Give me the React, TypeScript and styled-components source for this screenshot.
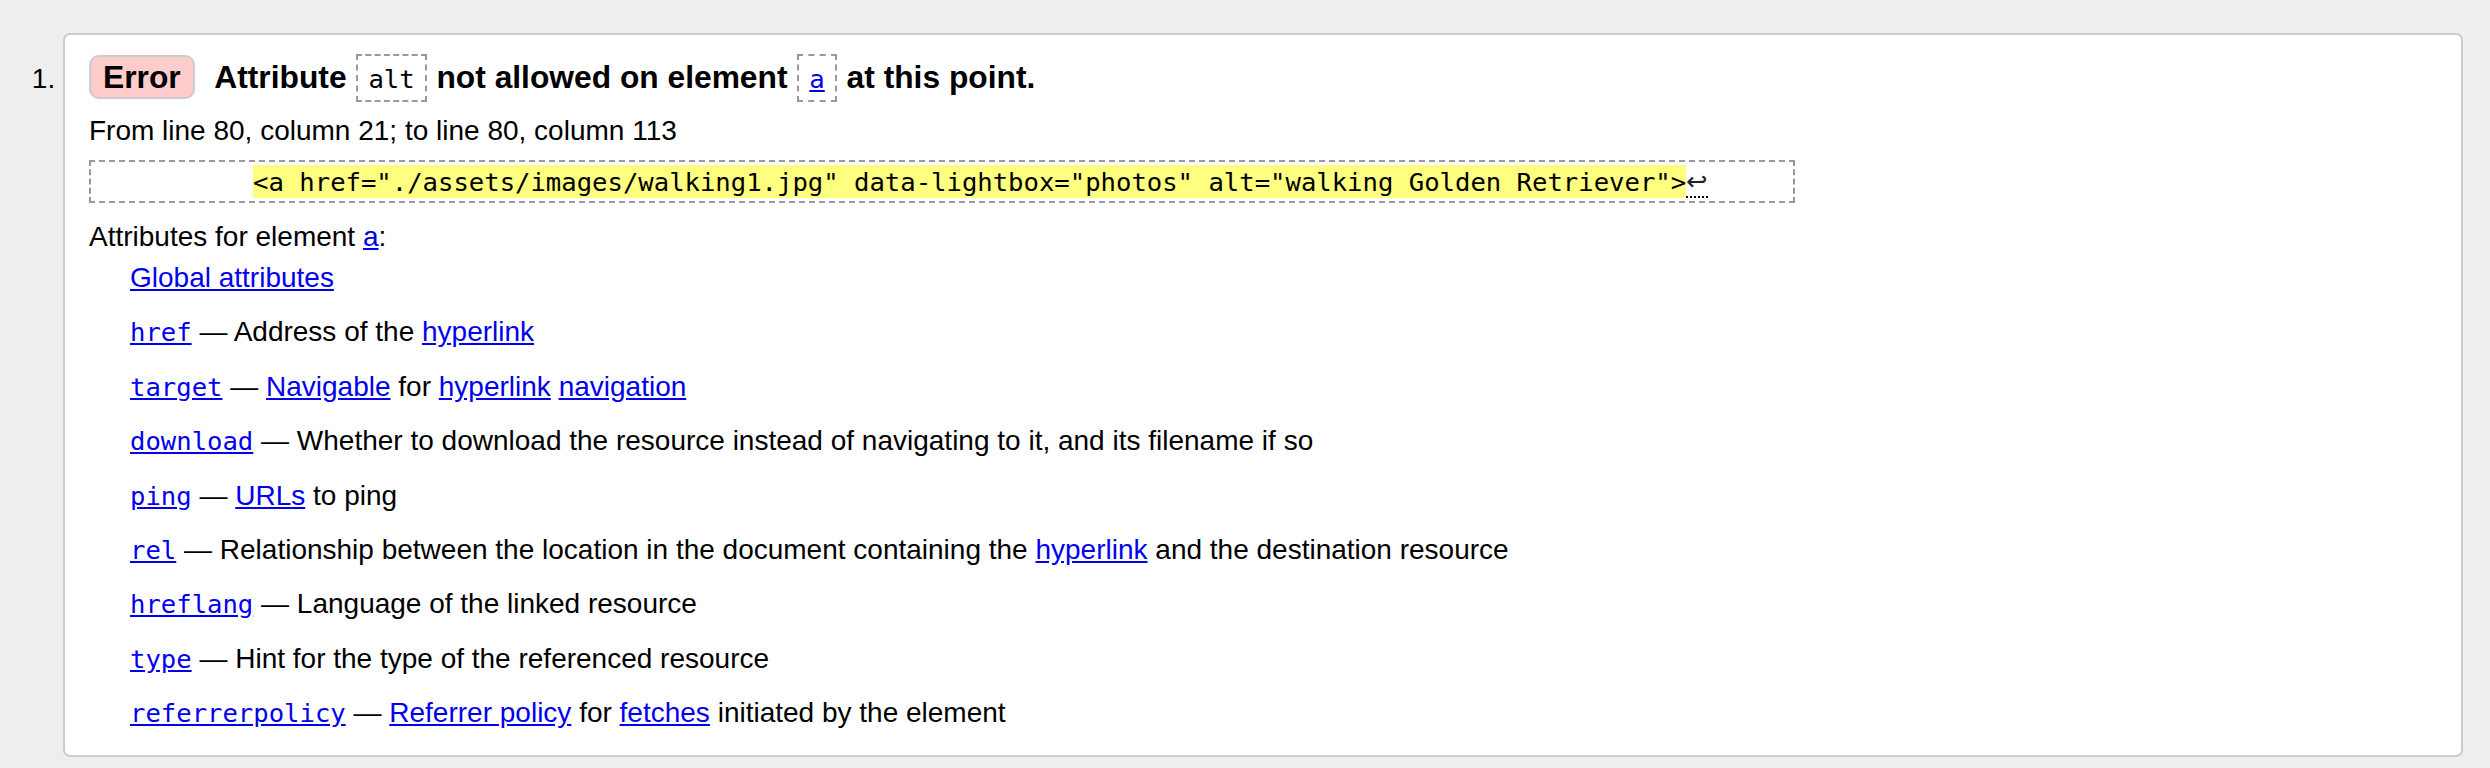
import React from "react";
import styled, { createGlobalStyle } from "styled-components";

const GlobalStyle = createGlobalStyle`
  html, body {
    margin: 0;
    padding: 0;
    background: #eeeeee;
  }
  body {
    font-family: "Liberation Sans", Arial, sans-serif;
    font-size: 28px;
    color: #000;
    overflow: hidden;
  }
`;

const MessageList = styled.ol`
  margin: 0;
  padding: 33px 27px 0 63px;
  list-style: decimal outside;
`;

const Message = styled.li`
  background: #fff;
  border: 2px solid #cccccc;
  border-radius: 7px;
  padding: 18px 24px 26px 24px;
  line-height: 32px;
`;

const Heading = styled.p`
  margin: 0;
  font-size: 31.75px;
  font-weight: bold;
  line-height: 48px;
`;

const Badge = styled.strong`
  display: inline-block;
  background: #ffcccc;
  border: 2px solid #cccccc;
  border-radius: 10px;
  padding: 0 12px;
  line-height: 40px;
  margin-right: 12px;
`;

const BoxedCode = styled.code`
  display: inline-block;
  font-family: "DejaVu Sans Mono", "Liberation Mono", monospace;
  font-size: 25.6px;
  font-weight: normal;
  border: 2px dashed #999999;
  padding: 3px 10px 0;
  line-height: 41px;
  margin: 0 1px;
`;

const Link = styled.a`
  color: #0000ee;
  text-decoration: underline;
`;

const AttrCode = styled.code`
  font-family: "DejaVu Sans Mono", "Liberation Mono", monospace;
  font-size: 25.6px;
`;

const Location = styled.p`
  margin: 13px 0 0;
`;

const Extract = styled.pre`
  width: fit-content;
  margin: 13px 0 0;
  border: 2px dashed #999999;
  padding: 3px 8px;
  font-family: "DejaVu Sans Mono", "Liberation Mono", monospace;
  font-size: 25.6px;
  line-height: 33px;
  white-space: pre;
`;

const Highlight = styled.mark`
  background: #ffff80;
  color: #000;
  padding: 1.5px 0;
`;

const LineFeed = styled.span`
  font-family: "DejaVu Sans", sans-serif;
  color: #222;
  border-bottom: 2px dotted #000;
`;

const AttrIntro = styled.p`
  margin: 18px 0 0;
`;

const AttrList = styled.dl`
  margin: 9px 0 0;
`;

const AttrItem = styled.dd`
  margin: 0 0 0 41px;
  & + & {
    margin-top: 22.4px;
  }
`;

type Part = string | { link: string };

const attrs: { name?: string; desc: Part[] }[] = [
  { desc: [{ link: "Global attributes" }] },
  { name: "href", desc: ["Address of the ", { link: "hyperlink" }] },
  {
    name: "target",
    desc: [{ link: "Navigable" }, " for ", { link: "hyperlink" }, " ", { link: "navigation" }],
  },
  {
    name: "download",
    desc: ["Whether to download the resource instead of navigating to it, and its filename if so"],
  },
  { name: "ping", desc: [{ link: "URLs" }, " to ping"] },
  {
    name: "rel",
    desc: [
      "Relationship between the location in the document containing the ",
      { link: "hyperlink" },
      " and the destination resource",
    ],
  },
  { name: "hreflang", desc: ["Language of the linked resource"] },
  { name: "type", desc: ["Hint for the type of the referenced resource"] },
  {
    name: "referrerpolicy",
    desc: [{ link: "Referrer policy" }, " for ", { link: "fetches" }, " initiated by the element"],
  },
];

const renderParts = (parts: Part[]) =>
  parts.map((p, i) =>
    typeof p === "string" ? (
      <React.Fragment key={i}>{p}</React.Fragment>
    ) : (
      <Link key={i} href="#">
        {p.link}
      </Link>
    )
  );

export default function App() {
  return (
    <>
      <GlobalStyle />
      <MessageList>
        <Message>
          <Heading>
            <Badge>Error</Badge> Attribute <BoxedCode>alt</BoxedCode> not allowed on element{" "}
            <BoxedCode>
              <Link href="#">a</Link>
            </BoxedCode>{" "}
            at this point.
          </Heading>
          <Location>From line 80, column 21; to line 80, column 113</Location>
          <Extract>
            {"          "}
            <Highlight>{'<a href="./assets/images/walking1.jpg" data-lightbox="photos" alt="walking Golden Retriever">'}</Highlight>
            <LineFeed>↩</LineFeed>
            {"     "}
          </Extract>
          <AttrIntro>
            Attributes for element <Link href="#">a</Link>:
          </AttrIntro>
          <AttrList>
            {attrs.map((a, i) => (
              <AttrItem key={i}>
                {a.name && (
                  <>
                    <Link href="#">
                      <AttrCode>{a.name}</AttrCode>
                    </Link>
                    {" — "}
                  </>
                )}
                {renderParts(a.desc)}
              </AttrItem>
            ))}
          </AttrList>
        </Message>
      </MessageList>
    </>
  );
}
